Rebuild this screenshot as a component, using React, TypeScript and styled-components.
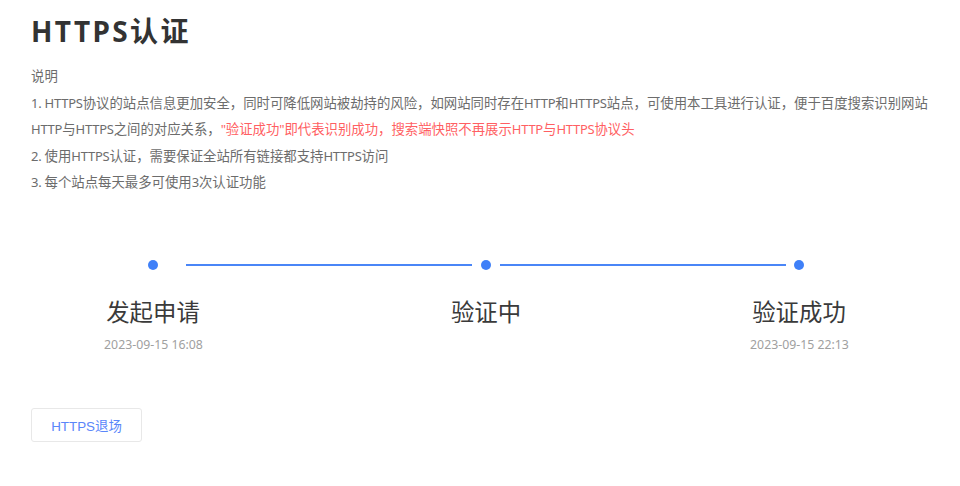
import React from "react";
import styled, { createGlobalStyle } from "styled-components";

const Global = createGlobalStyle`
  html, body { margin: 0; padding: 0; background: #fff; }
  body { font-family: "Noto Sans", "Noto Sans CJK SC", sans-serif; }
`;

const Page = styled.main`
  width: 960px;
  height: 486px;
  box-sizing: border-box;
  padding: 11px 0 0 31px;
  overflow: hidden;
`;

const Title = styled.h1`
  margin: 0;
  font-size: 28px;
  line-height: 40px;
  font-weight: 700;
  letter-spacing: 2.4px;
  color: #333;
`;

const Notes = styled.div`
  margin-top: 12px;
  width: 915px;
  font-size: 13.39px;
  line-height: 26.6px;
  color: #6c6c6c;
`;

const Latin = styled.span`
  font-size: 13px;
  letter-spacing: -0.25px;
`;

const Alert = styled.span`
  color: #ff5f63;
`;

const Rail = styled.div`
  display: flex;
  align-items: center;
  margin-top: 63px;
  padding-left: 117px;
  height: 12px;
`;

const Dot = styled.span`
  flex: none;
  width: 10px;
  height: 10px;
  border-radius: 50%;
  background: #3f80f8;
`;

const Line = styled.span<{ $before: number; $after: number }>`
  flex: none;
  width: 286px;
  height: 2px;
  margin: 0 ${(p) => p.$after}px 0 ${(p) => p.$before}px;
  background: #4a86f7;
`;

const Steps = styled.div`
  display: grid;
  grid-template-columns: 100px 100px 100px;
  margin-top: 24px;
  padding-left: 72px;
`;

const Step = styled.div<{ $shift: number }>`
  display: flex;
  flex-direction: column;
  align-items: center;
  margin-left: ${(p) => p.$shift}px;
  width: 100px;
`;

const StepName = styled.div`
  font-size: 23.4px;
  line-height: 34px;
  color: #3a3a3a;
  white-space: nowrap;
`;

const StepTime = styled.div`
  margin-top: 7px;
  padding-left: 1px;
  min-height: 18px;
  font-size: 12.3px;
  line-height: 18px;
  color: #a0a0a0;
  white-space: nowrap;
`;

const Exit = styled.button`
  display: block;
  margin-top: 54px;
  width: 111px;
  height: 34px;
  padding: 0;
  background: #fff;
  border: 1px solid #e8e8e8;
  border-radius: 3px;
  font-family: "Liberation Sans", "Noto Sans CJK SC", sans-serif;
  font-size: 13.4px;
  color: #5a86fa;
`;

export default function App() {
  return (
    <Page>
      <Global />
      <Title>HTTPS认证</Title>
      <Notes>
        说明
        <br />
        <Latin>1. HTTPS</Latin>协议的站点信息更加安全，同时可降低网站被劫持的风险，如网站同时存在<Latin>HTTP</Latin>和<Latin>HTTPS</Latin>站点，可使用本工具进行认证，便于百度搜索识别网站
        <br />
        <Latin>HTTP</Latin>与<Latin>HTTPS</Latin>之间的对应关系，
        <Alert>
          <Latin>"</Latin>验证成功<Latin>"</Latin>即代表识别成功，搜索端快照不再展示<Latin>HTTP</Latin>与<Latin>HTTPS</Latin>协议头
        </Alert>
        <br />
        <Latin>2. </Latin>使用<Latin>HTTPS</Latin>认证，需要保证全站所有链接都支持<Latin>HTTPS</Latin>访问
        <br />
        <Latin>3. </Latin>每个站点每天最多可使用<Latin>3</Latin>次认证功能
      </Notes>
      <Rail>
        <Dot />
        <Line $before={28} $after={9} />
        <Dot />
        <Line $before={9} $after={8} />
        <Dot />
      </Rail>
      <Steps>
        <Step $shift={0}>
          <StepName>发起申请</StepName>
          <StepTime>2023-09-15 16:08</StepTime>
        </Step>
        <Step $shift={233}>
          <StepName>验证中</StepName>
          <StepTime />
        </Step>
        <Step $shift={446}>
          <StepName>验证成功</StepName>
          <StepTime>2023-09-15 22:13</StepTime>
        </Step>
      </Steps>
      <Exit>HTTPS退场</Exit>
    </Page>
  );
}
